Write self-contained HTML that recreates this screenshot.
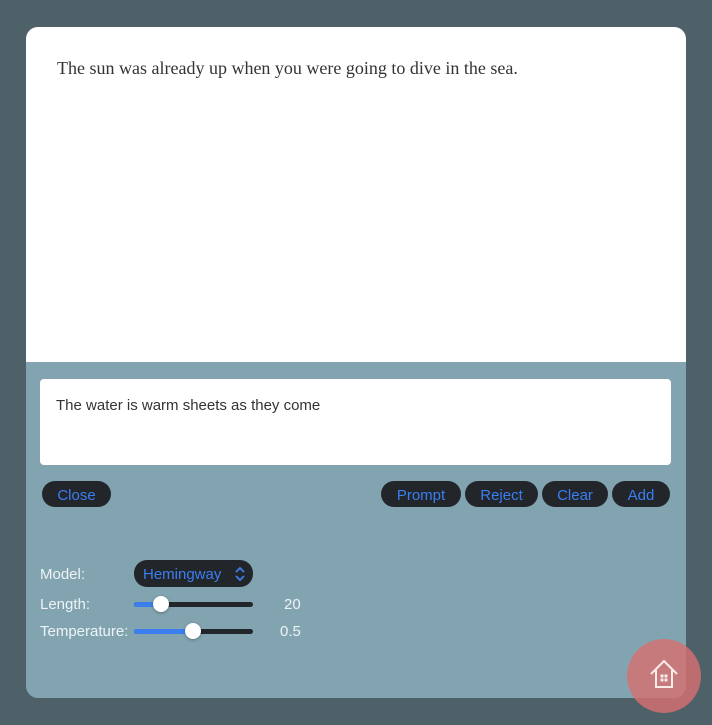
<!DOCTYPE html>
<html><head><style>
body{margin:0;width:712px;height:725px;background:#4e6168;position:relative;overflow:hidden;font-family:"Liberation Sans",sans-serif}
.card{position:absolute;left:26px;top:27px;width:660px;height:671px;border-radius:12px;background:#82a4b0;overflow:hidden}
.top{position:absolute;left:0;top:0;width:660px;height:335px;background:#fff}
.top p{position:absolute;left:31px;top:31px;margin:0;font-family:"Liberation Serif",serif;font-size:18px;color:#333}
.ta{position:absolute;left:14px;top:352px;width:631px;height:86px;background:#fff;border-radius:4px}
.ta span{position:absolute;left:16px;top:18px;font-size:15px;color:#333}
.b{position:absolute;top:454px;height:26px;border-radius:13px;background:#22262b;color:#3b7ef0;font-size:15px;display:flex;align-items:center;justify-content:center;padding-top:2px;box-sizing:border-box}
.l{position:absolute;left:14px;color:#eef3f5;font-size:15px}
.tr{position:absolute;left:108px;width:119px;height:5px;border-radius:3px;background:#22262b}
.tr i{position:absolute;left:0;top:0;height:5px;border-radius:3px;background:#3b7ef0}
.k{position:absolute;width:16px;height:16px;border-radius:50%;background:#fff;top:-6px;box-shadow:0 1px 3px rgba(0,0,0,.3)}
.v{position:absolute;color:#eef3f5;font-size:15px}
</style></head><body>
<div class="card">
<div class="top"><p>The sun was already up when you were going to dive in the sea.</p></div>
<div class="ta"><span>The water is warm sheets as they come</span></div>
<div class="b" style="left:16px;width:69px">Close</div>
<div class="b" style="left:355px;width:80px">Prompt</div>
<div class="b" style="left:439px;width:73px">Reject</div>
<div class="b" style="left:516px;width:66px">Clear</div>
<div class="b" style="left:586px;width:58px">Add</div>
<div class="l" style="top:539px">Model:</div>
<div class="b" style="left:108px;top:533px;width:119px;height:27px;justify-content:flex-start;padding-left:9px">Hemingway
<svg style="position:absolute;right:8px;top:7px" width="10" height="14" viewBox="0 0 10 14" fill="none" stroke="#3b7ef0" stroke-width="1.8"><path d="M1 5L5 1 9 5M1 9L5 13 9 9"/></svg></div>
<div class="l" style="top:569px">Length:</div>
<div class="tr" style="top:575px"><i style="width:28px"></i><div class="k" style="left:19px"></div></div>
<div class="v" style="left:258px;top:569px">20</div>
<div class="l" style="top:596px">Temperature:</div>
<div class="tr" style="top:602px"><i style="width:60px"></i><div class="k" style="left:51px"></div></div>
<div class="v" style="left:254px;top:596px">0.5</div>
</div>
<div style="position:absolute;left:627px;top:639px;width:74px;height:74px;border-radius:50%;background:rgba(214,112,112,.82)"></div>
<svg style="position:absolute;left:648px;top:658px" width="32" height="32" viewBox="0 0 32 32" fill="none" stroke="#fbecec" stroke-width="2"><path d="M3 16L16 3 29 16M8 12V29H24V12"/><rect x="12.5" y="16.5" width="3" height="3" fill="#fbecec" stroke="none"/><rect x="16.5" y="16.5" width="3" height="3" fill="#fbecec" stroke="none"/><rect x="12.5" y="20.5" width="3" height="3" fill="#fbecec" stroke="none"/><rect x="16.5" y="20.5" width="3" height="3" fill="#fbecec" stroke="none"/></svg>
</body></html>
